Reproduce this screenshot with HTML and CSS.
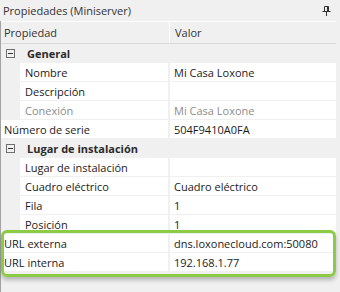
FILE: index.html
```html
<!DOCTYPE html>
<html lang="es">
<head>
<meta charset="UTF-8">
<title>Propiedades (Miniserver)</title>
<link rel="stylesheet" href="styles.css">
</head>
<body>
<div class="panel">
  <!-- Title of the docked panel -->
  <div class="titlebar">
    <span>Propiedades (Miniserver)</span>
    <svg class="pin" width="9" height="10" viewBox="0 0 9 10">
      <path d="M2.5 0.5h4v5h-4z" fill="none" stroke="#333" stroke-width="1"/>
      <path d="M5 1v4.5h1.5v-4.5z" fill="#333"/>
      <path d="M0.5 5.5h8" stroke="#333" stroke-width="1"/>
      <path d="M4.5 6v4" stroke="#333" stroke-width="1"/>
    </svg>
  </div>
  <!-- Property grid -->
  <div class="grid">
    <div class="head">
      <div class="hcell first">Propiedad</div>
      <div class="hcell">Valor</div>
    </div>
    <div class="row cat"><span class="toggle"></span><span class="cat-name">General</span></div>
    <div class="row child"><div class="name">Nombre</div><div class="value">Mi Casa Loxone</div></div>
    <div class="row child"><div class="name">Descripción</div><div class="value"></div></div>
    <div class="row child disabled"><div class="name">Conexión</div><div class="value">Mi Casa Loxone</div></div>
    <div class="row"><div class="name">Número de serie</div><div class="value">504F9410A0FA</div></div>
    <div class="row cat"><span class="toggle"></span><span class="cat-name">Lugar de instalación</span></div>
    <div class="row child"><div class="name">Lugar de instalación</div><div class="value"></div></div>
    <div class="row child"><div class="name">Cuadro eléctrico</div><div class="value">Cuadro eléctrico</div></div>
    <div class="row child"><div class="name">Fila</div><div class="value">1</div></div>
    <div class="row child"><div class="name">Posición</div><div class="value">1</div></div>
    <div class="row"><div class="name">URL externa</div><div class="value">dns.loxonecloud.com:50080</div></div>
    <div class="row"><div class="name">URL interna</div><div class="value">192.168.1.77</div></div>
    <!-- green marker over the URL rows -->
    <div class="highlight"></div>
  </div>
</div>
</body>
</html>
```

FILE: styles.css
```css
/* Page */
body {
  margin: 0;
  background-color: #f0f0f0;
  font-family: "Open Sans", "Noto Sans", sans-serif;
  font-size: 11px;
  color: #1b1b1b;
}
.panel {
  width: 340px;
  height: 292px;
  display: flex;
  flex-direction: column;
}
/* Title bar */
.titlebar {
  height: 21px;
  display: flex;
  align-items: center;
  justify-content: space-between;
  padding: 0 9px 0 3px;
  color: #333;
}
.pin {
  margin-top: 1px;
}
/* Grid */
.grid {
  position: relative;
  flex: 1;
  border-left: 1px solid #a3a3a3;
}
.head {
  display: grid;
  grid-template-columns: 169px 1fr;
  height: 21px;
  margin-right: 4px;
  border-top: 1px solid #ffffff;
  border-bottom: 1px solid #d8d8d8;
}
.hcell {
  display: flex;
  align-items: center;
  padding-left: 5px;
  color: #333;
}
.hcell.first {
  padding-left: 3px;
  border-right: 1px solid #ffffff;
}
.row {
  display: grid;
  grid-template-columns: 167px 1fr;
  column-gap: 2px;
  height: 18px;
  margin: 0 4px 1px 0;
}
.name,
.value {
  display: flex;
  align-items: center;
  background-color: #ffffff;
  white-space: nowrap;
}
.name {
  padding-left: 3px;
}
.value {
  padding-left: 4px;
}
.child .name {
  margin-left: 19px;
  padding-left: 5px;
}
.disabled .name,
.disabled .value {
  color: #8c8c8c;
}
/* Category rows */
.row.cat {
  display: flex;
  align-items: center;
}
.toggle {
  position: relative;
  width: 7px;
  height: 7px;
  margin-left: 5px;
  border: 1px solid #6f6f6f;
}
.toggle::after {
  content: "";
  position: absolute;
  left: 1px;
  top: 3px;
  width: 5px;
  height: 1px;
  background-color: #333;
}
.cat-name {
  margin-left: 10px;
  font-weight: bold;
  color: #2b2b2b;
}
/* Highlight marker */
.highlight {
  position: absolute;
  left: 0;
  top: 209px;
  width: 329px;
  height: 41px;
  border: 3px solid #8ccc45;
  border-radius: 6px;
  box-shadow: 0 3px 4px rgba(0, 0, 0, 0.25);
}
```
